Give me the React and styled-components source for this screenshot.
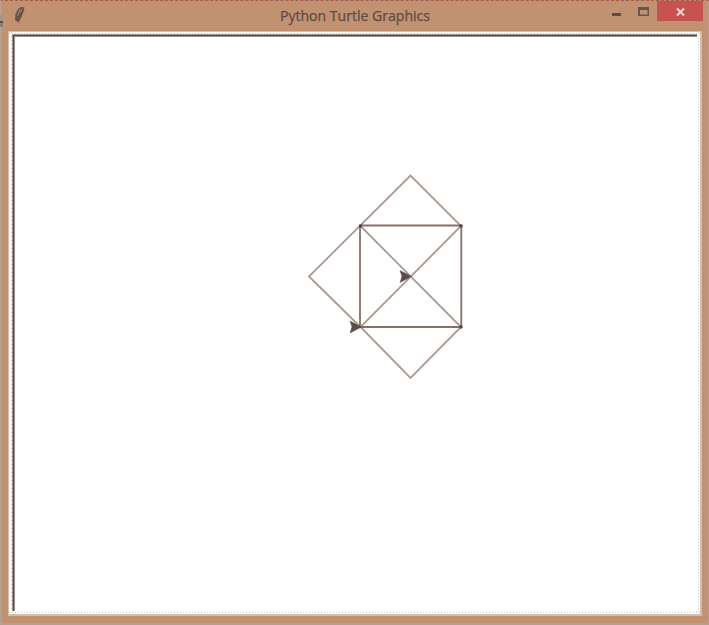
import React from "react";
import styled, { createGlobalStyle } from "styled-components";

const Global = createGlobalStyle`
  * { box-sizing: border-box; }
  body { margin: 0; overflow: hidden; background: #c29170; }
`;

const Window = styled.main`
  position: relative;
  width: 709px;
  height: 625px;
  display: flex;
  flex-direction: column;
  padding: 0 6px 7px;
  background: #c29170;
  border: solid #b3a08f;
  border-width: 1px 1px 2px 2px;
  border-top: 1px dashed #a35a50;

  /* sliver of the desktop showing past the left window edge */
  &::before {
    content: "";
    position: absolute;
    left: -2px;
    top: 14px;
    width: 3px;
    height: 12px;
    background: linear-gradient(#a5948a 50%, #5b4d49 50% 70%, #8f7c72 70%);
  }
`;

const TitleBar = styled.header`
  height: 30px;
  flex: none;
  display: grid;
  grid-template-columns: 92px 1fr 92px;
  align-items: start;
  margin-right: -1px;
`;

const AppIcon = styled.svg`
  width: 14px;
  height: 18px;
  margin: 5px 0 0 5px;
`;

const Title = styled.h1`
  margin: 6px 0 0;
  font-size: 14px;
  font-weight: 400;
`;

const TitleText = styled.svg`
  display: block;
  width: 100%;
  height: 20px;
  text {
    font: 400 14.5px "Open Sans", sans-serif;
    fill: #5c4c48;
    stroke: #5c4c48;
    stroke-width: 0.25px;
  }
`;

const Controls = styled.div`
  display: flex;
  justify-content: flex-end;
`;

const Control = styled.button`
  width: ${(p) => p.$width}px;
  height: 20px;
  flex: none;
  padding: 0;
  border: 0;
  background: ${(p) => (p.$danger ? "#c75250" : "transparent")};
  svg { display: block; overflow: visible; }
`;

const Frame = styled.section`
  flex: 1;
  display: flex;
  padding: 2px 3px 3px;
  background:
    repeating-linear-gradient(90deg, #cdc2ba 0 1px, #fff 1px 3px) 0 1px / 100% 1px no-repeat,
    repeating-linear-gradient(90deg, #cdc2ba 0 1px, #fff 1px 3px) 0 calc(100% - 1px) / 100% 1px no-repeat,
    repeating-linear-gradient(#cdc2ba 0 1px, #fff 1px 4px) 2px 0 / 1px 100% no-repeat,
    repeating-linear-gradient(#d8cec8 0 1px, #fff 1px 3px) calc(100% - 1px) 0 / 1px 100% no-repeat,
    #fff;
  border: solid #cdbfb6;
  border-width: 1px 2px 2px 1px;
`;

const Bevel = styled.div`
  flex: 1;
  display: flex;
  padding: 1px 0 0 1px;
  background: #5a4a44;
  border: solid #a3948b;
  border-width: 1px 0 0 1px;
`;

const Surface = styled.div`
  flex: 1;
  display: flex;
  background: #fff;
  border: solid #9b8b82;
  border-width: 1px 0 0 1px;
`;

const Canvas = styled.svg`
  display: block;
  width: 682px;
  height: 574px;
`;

const Arrow = ({ x, y }) => (
  <path
    d={`M${x + 1} ${y}L${x - 10.5} ${y - 6}L${x - 8.5} ${y}L${x - 10.5} ${y + 6}Z`}
    fill="#5b4d49"
    stroke="#5b4d49"
    strokeWidth="0.5"
  />
);

export default function App() {
  return (
    <>
      <Global />
      <Window>
        <TitleBar>
          <AppIcon viewBox="13 6 14 18">
            <path d="M21 7L24.5 7.5L23.5 12L20.5 19L18.5 22.5L15 20L15.5 14L18 9Z" fill="#62534d" />
            <path d="M20 9L17.5 16M22.3 8.5L20.5 12.5" stroke="#a08b7e" strokeWidth="1" fill="none" />
            <path d="M18 22h1.5" stroke="#c75250" />
          </AppIcon>
          <Title>
            <TitleText>
              <text x="180" y="14" textLength="150" lengthAdjust="spacingAndGlyphs">Python Turtle Graphics</text>
            </TitleText>
          </Title>
          <Controls>
            <Control $width={29} aria-label="Minimize">
              <svg width="29" height="20"><path d="M1 12h9v3h-9z" fill="#5b4d49" /></svg>
            </Control>
            <Control $width={17} aria-label="Maximize">
              <svg width="17" height="20">
                <path d="M-2 6h11v9h-11zM0 9v4.5h7.5V9z" fill="#66544d" fillRule="evenodd" />
              </svg>
            </Control>
            <Control $width={46} $danger aria-label="Close">
              <svg width="46" height="20"><path d="M20 7.5L27 14.5M27 7.5L20 14.5" stroke="#ecdccf" strokeWidth="2" /></svg>
            </Control>
          </Controls>
        </TitleBar>
        <Frame>
          <Bevel>
            <Surface>
              <Canvas viewBox="15 37 682 574">
                <g fill="none" stroke="#aa9b93" strokeWidth="1.8">
                  <path d="M360.5 327L309 276.5L410.5 175.5L461 226L360.5 327L410.5 378L461 327L360.5 226" />
                </g>
                <path d="M360 225.5H461.3V327H360Z" fill="none" stroke="#857068" strokeWidth="1.8" />
                <g fill="#514642">
                  <circle cx="360.5" cy="226" r="1.7" />
                  <circle cx="461" cy="226" r="1.7" />
                  <circle cx="461" cy="327" r="1.7" />
                </g>
                <Arrow x={410.5} y={276.5} />
                <Arrow x={360.5} y={327} />
              </Canvas>
            </Surface>
          </Bevel>
        </Frame>
      </Window>
    </>
  );
}
